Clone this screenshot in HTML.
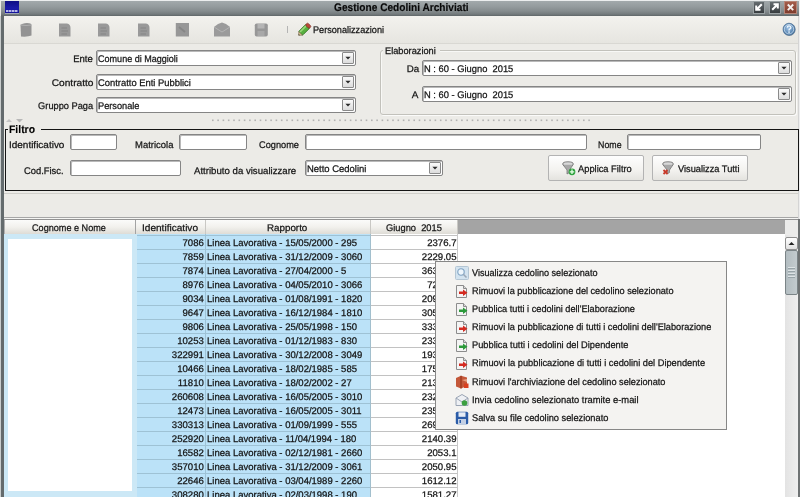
<!DOCTYPE html><html><head><meta charset="utf-8"><style>html,body{margin:0;padding:0;width:800px;height:497px;overflow:hidden;background:#ecebe7}body>div,body>svg{position:absolute}.t{font-family:"Liberation Sans", sans-serif;text-rendering:geometricPrecision;-webkit-text-stroke:0.25px currentColor;filter:grayscale(1)}</style></head><body><div style="left:0px;top:0px;width:800px;height:497px;background:#ecebe7"></div><div style="left:0px;top:0px;width:800px;height:1px;background:#eceeee"></div><div style="left:1px;top:1px;width:799px;height:15px;background:linear-gradient(#a2a9ab,#959c9e 35%,#868d8f 65%,#737a7c 88%,#5f6668)"></div><div style="left:1px;top:16px;width:3px;height:481px;background:#646b6d"></div><div style="left:0px;top:16px;width:1px;height:481px;background:#c9cdcd"></div><div style="left:799px;top:0px;width:1px;height:497px;background:#eeeeee"></div><div style="left:798px;top:16px;width:1px;height:203px;background:#d4d4d4"></div><div style="left:798px;top:219px;width:2px;height:278px;background:#6f7374"></div><div style="left:5px;top:1px;width:14px;height:12px;background:linear-gradient(#0e0e84,#1a1aa8 60%,#14149a)"></div><div style="left:6px;top:10px;width:12px;height:2px;background:repeating-linear-gradient(90deg,#d0d0f4 0 2px,#7070c8 2px 3px);opacity:0.85"></div><div style="left:5px;top:13px;width:14px;height:1px;background:#9da4b0"></div><div class="t" style="top:2.89px;font-size:11px;line-height:11px;font-weight:bold;color:#080808;white-space:pre;-webkit-text-stroke:0.15px #080808;left:333.80px;transform-origin:0.6px 0;transform:scaleX(0.9195);">Gestione Cedolini Archiviati</div><div style="left:753px;top:1px;width:12px;height:13px;background:linear-gradient(#6a7174,#33383b);box-shadow:inset 0 0 0 1px #9aa1a3"></div><div style="left:769px;top:1px;width:12px;height:13px;background:linear-gradient(#6a7174,#33383b);box-shadow:inset 0 0 0 1px #9aa1a3"></div><div style="left:784px;top:1px;width:13px;height:13px;background:linear-gradient(#a8604e,#7a382a);box-shadow:inset 0 0 0 1px #b68476"></div><svg style="left:753px;top:1px" width="12" height="12" viewBox="0 0 12 12"><path d="M8.8 3.2 L3.8 8.2 M3.2 4.5 V8.8 H7.5" stroke="#fff" stroke-width="2" fill="none"/></svg><svg style="left:769px;top:1px" width="12" height="12" viewBox="0 0 12 12"><path d="M3.2 8.8 L8.2 3.8 M4.5 3.2 H8.8 V7.5" stroke="#fff" stroke-width="2" fill="none"/></svg><svg style="left:784px;top:1px" width="13" height="13" viewBox="0 0 13 13"><path d="M3.8 3.5 L9.2 9.2 M9.2 3.5 L3.8 9.2" stroke="#f4f0ee" stroke-width="1.9" fill="none"/></svg><div style="left:4px;top:16px;width:794px;height:27px;background:linear-gradient(#f3f2ee,#e6e5e0)"></div><div style="left:4px;top:43px;width:794px;height:1px;background:#d9d8d3"></div><svg style="left:19px;top:22px" width="14" height="16" viewBox="0 0 14 16"><g style="filter:blur(0.35px)"><path d="M1.5 3 Q3 1.5 8 1 Q12.5 1.2 12.5 3 V13.5 Q9 15 2 14.5 Z" fill="#939393"/><path d="M1.5 3 Q7 4 12.5 3" stroke="#b0b0b0" fill="none"/></g></svg><svg style="left:58px;top:22px" width="14" height="16" viewBox="0 0 14 16"><g style="filter:blur(0.35px)"><path d="M1 1.5 H9 Q12.5 2 12.5 6 V14.5 H1 Z" fill="#999"/><path d="M3.5 6 H9 M3.5 9 H10 M3.5 12 H9" stroke="#858585"/></g></svg><svg style="left:97px;top:22px" width="14" height="16" viewBox="0 0 14 16"><g style="filter:blur(0.35px)"><path d="M1 1.5 H9 Q12.5 2 12.5 6 V14.5 H1 Z" fill="#999"/><path d="M3.5 6 H9 M3.5 9 H10 M3.5 12 H9" stroke="#858585"/></g></svg><svg style="left:137px;top:22px" width="14" height="16" viewBox="0 0 14 16"><g style="filter:blur(0.35px)"><path d="M1 1.5 H9 Q12.5 2 12.5 6 V14.5 H1 Z" fill="#999"/><path d="M3.5 6 H9 M3.5 9 H10 M3.5 12 H9" stroke="#858585"/></g></svg><svg style="left:175px;top:22px" width="15" height="16" viewBox="0 0 15 16"><g style="filter:blur(0.35px)"><rect x="0.8" y="1" width="13.2" height="13.5" fill="#979797"/><path d="M4 5 L10 10" stroke="#868686" stroke-width="2"/></g></svg><svg style="left:213px;top:21px" width="18" height="17" viewBox="0 0 18 17"><g style="filter:blur(0.35px)"><path d="M1 6 Q5 2 9 1.5 Q13 2 17 6 V15.5 H1 Z" fill="#9b9b9b"/><path d="M1 6 L9 11 L17 6" stroke="#b4b4b4" fill="none"/></g></svg><svg style="left:254px;top:22px" width="14" height="16" viewBox="0 0 14 16"><g style="filter:blur(0.35px)"><rect x="0.8" y="1.5" width="13" height="13" rx="1.8" fill="#979797"/><rect x="3.5" y="2" width="7" height="4.5" fill="#b5b5b5"/><rect x="3.5" y="9" width="7" height="5" fill="#a8a8a8"/></g></svg><div style="left:287px;top:26px;width:1px;height:7px;background:#b4b4b4"></div><svg style="left:296px;top:21px" width="17" height="17" viewBox="0 0 17 17"><g transform="rotate(-45 8.5 8.5)"><rect x="3" y="5.8" width="10" height="5.4" rx="1" fill="#58b040" stroke="#2e7020" stroke-width="0.8"/><rect x="3.5" y="6.3" width="9" height="1.6" fill="#9ad87a"/><rect x="12.2" y="5.8" width="3.3" height="5.4" rx="1.4" fill="#b84a3a" stroke="#7a2a20" stroke-width="0.6"/><path d="M3 5.8 L0.2 8.5 L3 11.2 Z" fill="#d8c090" stroke="#6a6040" stroke-width="0.5"/><path d="M1.2 7.5 L0.2 8.5 L1.2 9.5 Z" fill="#303030"/></g></svg><div class="t" style="top:26.07px;font-size:9.6px;line-height:9.6px;font-weight:normal;color:#141414;white-space:pre;left:313.00px;transform-origin:0.6px 0;transform:scaleX(0.9504);">Personalizzazioni</div><svg style="left:781px;top:21px" width="16" height="16" viewBox="0 0 16 16"><defs><radialGradient id="hg" cx="45%" cy="40%" r="60%"><stop offset="0" stop-color="#a2c4e6"/><stop offset="1" stop-color="#40709f"/></radialGradient></defs><circle cx="8.3" cy="8.6" r="6.3" fill="#3c5670" opacity="0.6"/><circle cx="8" cy="8.2" r="6" fill="url(#hg)" stroke="#50749a" stroke-width="0.7"/><circle cx="8" cy="8.2" r="4.7" fill="none" stroke="#d8e8f6" stroke-width="0.7"/><path d="M6.2 6.6 Q6.3 4.9 8.1 4.9 Q9.9 5 9.9 6.5 Q9.9 7.5 8.6 8.1 Q8 8.5 8 9.5" stroke="#eaf4fc" stroke-width="1.4" fill="none"/><rect x="7.3" y="10.4" width="1.5" height="1.4" fill="#eaf4fc"/></svg><div class="t" style="top:55.07px;font-size:9.6px;line-height:9.6px;font-weight:normal;color:#141414;white-space:pre;right:706.80px;transform-origin:100% 0;transform:scaleX(0.9920);">Ente</div><div class="t" style="top:79.07px;font-size:9.6px;line-height:9.6px;font-weight:normal;color:#141414;white-space:pre;right:706.80px;transform-origin:100% 0;transform:scaleX(1.0580);">Contratto</div><div class="t" style="top:102.07px;font-size:9.6px;line-height:9.6px;font-weight:normal;color:#141414;white-space:pre;right:706.80px;transform-origin:100% 0;transform:scaleX(0.9629);">Gruppo Paga</div><div style="left:96px;top:50px;width:260px;height:16px;background:#fff;border:1px solid #858585;box-sizing:border-box;box-shadow:inset 1px 1px 0 #b9b9b9;border-radius:2px"></div><div style="left:342px;top:52px;width:12px;height:12px;background:linear-gradient(#fafafa,#dcdcdc);border:1px solid #8a8a8a;box-sizing:border-box;border-radius:1px"></div><svg style="left:342px;top:52px" width="12" height="12" viewBox="0 0 12 12"><path d="M3.4 4.7 H8.6 L6.0 7.5 Z" fill="#2a2a2a"/></svg><div class="t" style="top:55.07px;font-size:9.6px;line-height:9.6px;font-weight:normal;color:#141414;white-space:pre;left:97.60px;transform-origin:0.6px 0;transform:scaleX(0.9416);">Comune di Maggioli</div><div style="left:96px;top:74px;width:260px;height:16px;background:#fff;border:1px solid #858585;box-sizing:border-box;box-shadow:inset 1px 1px 0 #b9b9b9;border-radius:2px"></div><div style="left:342px;top:76px;width:12px;height:12px;background:linear-gradient(#fafafa,#dcdcdc);border:1px solid #8a8a8a;box-sizing:border-box;border-radius:1px"></div><svg style="left:342px;top:76px" width="12" height="12" viewBox="0 0 12 12"><path d="M3.4 4.7 H8.6 L6.0 7.5 Z" fill="#2a2a2a"/></svg><div class="t" style="top:79.07px;font-size:9.6px;line-height:9.6px;font-weight:normal;color:#141414;white-space:pre;left:97.60px;transform-origin:0.6px 0;transform:scaleX(0.9785);">Contratto Enti Pubblici</div><div style="left:96px;top:97px;width:260px;height:16px;background:#fff;border:1px solid #858585;box-sizing:border-box;box-shadow:inset 1px 1px 0 #b9b9b9;border-radius:2px"></div><div style="left:342px;top:99px;width:12px;height:12px;background:linear-gradient(#fafafa,#dcdcdc);border:1px solid #8a8a8a;box-sizing:border-box;border-radius:1px"></div><svg style="left:342px;top:99px" width="12" height="12" viewBox="0 0 12 12"><path d="M3.4 4.7 H8.6 L6.0 7.5 Z" fill="#2a2a2a"/></svg><div class="t" style="top:102.07px;font-size:9.6px;line-height:9.6px;font-weight:normal;color:#141414;white-space:pre;left:97.60px;transform-origin:0.6px 0;transform:scaleX(0.9596);">Personale</div><div style="left:380px;top:50px;width:416px;height:65px;border:1px solid #c2c1bb;box-sizing:border-box;border-radius:3px;box-shadow:1px 1px 0 #fbfbfa, inset 1px 1px 0 #f8f8f6"></div><div style="left:383px;top:45px;width:57px;height:9px;background:#ecebe7"></div><div class="t" style="top:47.07px;font-size:9.6px;line-height:9.6px;font-weight:normal;color:#141414;white-space:pre;left:384.90px;transform-origin:0.6px 0;transform:scaleX(0.9612);">Elaborazioni</div><div class="t" style="top:65.07px;font-size:9.6px;line-height:9.6px;font-weight:normal;color:#141414;white-space:pre;right:381.00px;transform-origin:100% 0;transform:scaleX(1.0119);">Da</div><div class="t" style="top:91.07px;font-size:9.6px;line-height:9.6px;font-weight:normal;color:#141414;white-space:pre;right:381.20px;transform-origin:100% 0;transform:scaleX(1.0358);">A</div><div style="left:422px;top:60px;width:370px;height:16px;background:#fff;border:1px solid #858585;box-sizing:border-box;box-shadow:inset 1px 1px 0 #b9b9b9;border-radius:2px"></div><div style="left:778px;top:62px;width:12px;height:12px;background:linear-gradient(#fafafa,#dcdcdc);border:1px solid #8a8a8a;box-sizing:border-box;border-radius:1px"></div><svg style="left:778px;top:62px" width="12" height="12" viewBox="0 0 12 12"><path d="M3.4 4.7 H8.6 L6.0 7.5 Z" fill="#2a2a2a"/></svg><div class="t" style="top:65.07px;font-size:9.6px;line-height:9.6px;font-weight:normal;color:#141414;white-space:pre;left:423.60px;transform-origin:0.6px 0;transform:scaleX(0.9732);">N : 60 - Giugno  2015</div><div style="left:422px;top:86px;width:370px;height:16px;background:#fff;border:1px solid #858585;box-sizing:border-box;box-shadow:inset 1px 1px 0 #b9b9b9;border-radius:2px"></div><div style="left:778px;top:88px;width:12px;height:12px;background:linear-gradient(#fafafa,#dcdcdc);border:1px solid #8a8a8a;box-sizing:border-box;border-radius:1px"></div><svg style="left:778px;top:88px" width="12" height="12" viewBox="0 0 12 12"><path d="M3.4 4.7 H8.6 L6.0 7.5 Z" fill="#2a2a2a"/></svg><div class="t" style="top:91.07px;font-size:9.6px;line-height:9.6px;font-weight:normal;color:#141414;white-space:pre;left:423.60px;transform-origin:0.6px 0;transform:scaleX(0.9732);">N : 60 - Giugno  2015</div><svg style="left:0px;top:119px" width="600" height="3" viewBox="0 0 600 3"><rect x="212.0" y="0.5" width="1.6" height="1.6" fill="#b2b2b2"/><rect x="217.3" y="0.5" width="1.6" height="1.6" fill="#b2b2b2"/><rect x="222.6" y="0.5" width="1.6" height="1.6" fill="#b2b2b2"/><rect x="227.9" y="0.5" width="1.6" height="1.6" fill="#b2b2b2"/><rect x="233.2" y="0.5" width="1.6" height="1.6" fill="#b2b2b2"/><rect x="238.5" y="0.5" width="1.6" height="1.6" fill="#b2b2b2"/><rect x="243.8" y="0.5" width="1.6" height="1.6" fill="#b2b2b2"/><rect x="249.1" y="0.5" width="1.6" height="1.6" fill="#b2b2b2"/><rect x="254.4" y="0.5" width="1.6" height="1.6" fill="#b2b2b2"/><rect x="259.7" y="0.5" width="1.6" height="1.6" fill="#b2b2b2"/><rect x="265.0" y="0.5" width="1.6" height="1.6" fill="#b2b2b2"/><rect x="270.3" y="0.5" width="1.6" height="1.6" fill="#b2b2b2"/><rect x="275.6" y="0.5" width="1.6" height="1.6" fill="#b2b2b2"/><rect x="280.9" y="0.5" width="1.6" height="1.6" fill="#b2b2b2"/><rect x="286.2" y="0.5" width="1.6" height="1.6" fill="#b2b2b2"/><rect x="291.5" y="0.5" width="1.6" height="1.6" fill="#b2b2b2"/><rect x="296.8" y="0.5" width="1.6" height="1.6" fill="#b2b2b2"/><rect x="302.1" y="0.5" width="1.6" height="1.6" fill="#b2b2b2"/><rect x="307.4" y="0.5" width="1.6" height="1.6" fill="#b2b2b2"/><rect x="312.7" y="0.5" width="1.6" height="1.6" fill="#b2b2b2"/><rect x="318.0" y="0.5" width="1.6" height="1.6" fill="#b2b2b2"/><rect x="323.3" y="0.5" width="1.6" height="1.6" fill="#b2b2b2"/><rect x="328.6" y="0.5" width="1.6" height="1.6" fill="#b2b2b2"/><rect x="333.9" y="0.5" width="1.6" height="1.6" fill="#b2b2b2"/><rect x="339.2" y="0.5" width="1.6" height="1.6" fill="#b2b2b2"/><rect x="344.5" y="0.5" width="1.6" height="1.6" fill="#b2b2b2"/><rect x="349.8" y="0.5" width="1.6" height="1.6" fill="#b2b2b2"/><rect x="355.1" y="0.5" width="1.6" height="1.6" fill="#b2b2b2"/><rect x="360.4" y="0.5" width="1.6" height="1.6" fill="#b2b2b2"/><rect x="365.7" y="0.5" width="1.6" height="1.6" fill="#b2b2b2"/><rect x="371.0" y="0.5" width="1.6" height="1.6" fill="#b2b2b2"/><rect x="376.3" y="0.5" width="1.6" height="1.6" fill="#b2b2b2"/><rect x="381.6" y="0.5" width="1.6" height="1.6" fill="#b2b2b2"/><rect x="386.9" y="0.5" width="1.6" height="1.6" fill="#b2b2b2"/><rect x="392.2" y="0.5" width="1.6" height="1.6" fill="#b2b2b2"/><rect x="397.5" y="0.5" width="1.6" height="1.6" fill="#b2b2b2"/><rect x="402.8" y="0.5" width="1.6" height="1.6" fill="#b2b2b2"/><rect x="408.1" y="0.5" width="1.6" height="1.6" fill="#b2b2b2"/><rect x="413.4" y="0.5" width="1.6" height="1.6" fill="#b2b2b2"/><rect x="418.7" y="0.5" width="1.6" height="1.6" fill="#b2b2b2"/><rect x="424.0" y="0.5" width="1.6" height="1.6" fill="#b2b2b2"/><rect x="429.3" y="0.5" width="1.6" height="1.6" fill="#b2b2b2"/><rect x="434.6" y="0.5" width="1.6" height="1.6" fill="#b2b2b2"/><rect x="439.9" y="0.5" width="1.6" height="1.6" fill="#b2b2b2"/><rect x="445.2" y="0.5" width="1.6" height="1.6" fill="#b2b2b2"/><rect x="450.5" y="0.5" width="1.6" height="1.6" fill="#b2b2b2"/><rect x="455.8" y="0.5" width="1.6" height="1.6" fill="#b2b2b2"/><rect x="461.1" y="0.5" width="1.6" height="1.6" fill="#b2b2b2"/><rect x="466.4" y="0.5" width="1.6" height="1.6" fill="#b2b2b2"/><rect x="471.7" y="0.5" width="1.6" height="1.6" fill="#b2b2b2"/><rect x="477.0" y="0.5" width="1.6" height="1.6" fill="#b2b2b2"/><rect x="482.3" y="0.5" width="1.6" height="1.6" fill="#b2b2b2"/><rect x="487.6" y="0.5" width="1.6" height="1.6" fill="#b2b2b2"/><rect x="492.9" y="0.5" width="1.6" height="1.6" fill="#b2b2b2"/><rect x="498.2" y="0.5" width="1.6" height="1.6" fill="#b2b2b2"/><rect x="503.5" y="0.5" width="1.6" height="1.6" fill="#b2b2b2"/><rect x="508.8" y="0.5" width="1.6" height="1.6" fill="#b2b2b2"/><rect x="514.1" y="0.5" width="1.6" height="1.6" fill="#b2b2b2"/><rect x="519.4" y="0.5" width="1.6" height="1.6" fill="#b2b2b2"/><rect x="524.7" y="0.5" width="1.6" height="1.6" fill="#b2b2b2"/><rect x="530.0" y="0.5" width="1.6" height="1.6" fill="#b2b2b2"/><rect x="535.3" y="0.5" width="1.6" height="1.6" fill="#b2b2b2"/><rect x="540.6" y="0.5" width="1.6" height="1.6" fill="#b2b2b2"/><rect x="545.9" y="0.5" width="1.6" height="1.6" fill="#b2b2b2"/><rect x="551.2" y="0.5" width="1.6" height="1.6" fill="#b2b2b2"/><rect x="556.5" y="0.5" width="1.6" height="1.6" fill="#b2b2b2"/><rect x="561.8" y="0.5" width="1.6" height="1.6" fill="#b2b2b2"/><rect x="567.1" y="0.5" width="1.6" height="1.6" fill="#b2b2b2"/><rect x="572.4" y="0.5" width="1.6" height="1.6" fill="#b2b2b2"/><rect x="577.7" y="0.5" width="1.6" height="1.6" fill="#b2b2b2"/><rect x="583.0" y="0.5" width="1.6" height="1.6" fill="#b2b2b2"/><rect x="588.3" y="0.5" width="1.6" height="1.6" fill="#b2b2b2"/></svg><svg style="left:5px;top:118px" width="20" height="5" viewBox="0 0 20 5"><path d="M1 4 L4 1 L7 4 Z" fill="#c4c4c4"/><path d="M11 1 H18 L14.5 4.5 Z" fill="#b8b8b8"/></svg><div style="left:5px;top:129px;width:794px;height:62px;border:1px solid #141414;box-sizing:border-box"></div><div style="left:8px;top:123px;width:33px;height:10px;background:#ecebe7"></div><div class="t" style="top:124.89px;font-size:11px;line-height:11px;font-weight:bold;color:#000;white-space:pre;-webkit-text-stroke:0.1px #000;left:9.40px;transform-origin:0.6px 0;transform:scaleX(0.9434);">Filtro</div><div class="t" style="top:141.07px;font-size:9.6px;line-height:9.6px;font-weight:normal;color:#141414;white-space:pre;left:9.00px;transform-origin:0.6px 0;transform:scaleX(1.0396);">Identificativo</div><div style="left:70px;top:134px;width:47px;height:16px;background:#fff;border:1px solid #858585;box-sizing:border-box;box-shadow:inset 1px 1px 0 #b9b9b9;border-radius:2px"></div><div class="t" style="top:141.07px;font-size:9.6px;line-height:9.6px;font-weight:normal;color:#141414;white-space:pre;left:135.00px;transform-origin:0.6px 0;transform:scaleX(0.9862);">Matricola</div><div style="left:179px;top:134px;width:68px;height:16px;background:#fff;border:1px solid #858585;box-sizing:border-box;box-shadow:inset 1px 1px 0 #b9b9b9;border-radius:2px"></div><div class="t" style="top:141.07px;font-size:9.6px;line-height:9.6px;font-weight:normal;color:#141414;white-space:pre;left:259.40px;transform-origin:0.6px 0;transform:scaleX(0.9604);">Cognome</div><div style="left:305px;top:134px;width:282px;height:16px;background:#fff;border:1px solid #858585;box-sizing:border-box;box-shadow:inset 1px 1px 0 #b9b9b9;border-radius:2px"></div><div class="t" style="top:141.07px;font-size:9.6px;line-height:9.6px;font-weight:normal;color:#141414;white-space:pre;left:597.80px;transform-origin:0.6px 0;transform:scaleX(0.9189);">Nome</div><div style="left:627px;top:134px;width:134px;height:16px;background:#fff;border:1px solid #858585;box-sizing:border-box;box-shadow:inset 1px 1px 0 #b9b9b9;border-radius:2px"></div><div class="t" style="top:167.07px;font-size:9.6px;line-height:9.6px;font-weight:normal;color:#141414;white-space:pre;left:24.40px;transform-origin:0.6px 0;transform:scaleX(0.9764);">Cod.Fisc.</div><div style="left:70px;top:160px;width:111px;height:16px;background:#fff;border:1px solid #858585;box-sizing:border-box;box-shadow:inset 1px 1px 0 #b9b9b9;border-radius:2px"></div><div class="t" style="top:167.07px;font-size:9.6px;line-height:9.6px;font-weight:normal;color:#141414;white-space:pre;left:194.20px;transform-origin:0.6px 0;transform:scaleX(1.0034);">Attributo da visualizzare</div><div style="left:305px;top:160px;width:138px;height:16px;background:#fff;border:1px solid #858585;box-sizing:border-box;box-shadow:inset 1px 1px 0 #b9b9b9;border-radius:2px"></div><div style="left:429px;top:162px;width:12px;height:12px;background:linear-gradient(#fafafa,#dcdcdc);border:1px solid #8a8a8a;box-sizing:border-box;border-radius:1px"></div><svg style="left:429px;top:162px" width="12" height="12" viewBox="0 0 12 12"><path d="M3.4 4.7 H8.6 L6.0 7.5 Z" fill="#2a2a2a"/></svg><div class="t" style="top:165.07px;font-size:9.6px;line-height:9.6px;font-weight:normal;color:#141414;white-space:pre;left:306.60px;transform-origin:0.6px 0;transform:scaleX(0.9854);">Netto Cedolini</div><div style="left:548px;top:155px;width:96px;height:26px;background:linear-gradient(#fefefe,#f3f2ef 60%,#e4e3df);border:1px solid #b3b3b3;box-sizing:border-box;border-radius:2px"></div><svg style="left:562px;top:161px" width="14" height="15" viewBox="0 0 14 15"><ellipse cx="6" cy="3" rx="5.3" ry="2.2" fill="#d8d8d8" stroke="#6a6a6a" stroke-width="0.8"/><path d="M1 3.8 L5 9 V13 L7.5 11.5 V9 L11 3.8" fill="#a8a8a8" stroke="#777" stroke-width="0.8"/><circle cx="10" cy="10.8" r="3.4" fill="#2ea23e"/><path d="M7.8 10.8 H12.2 M10 8.6 V13" stroke="#e8ffe8" stroke-width="1.3"/></svg><div class="t" style="top:165.07px;font-size:9.6px;line-height:9.6px;font-weight:normal;color:#141414;white-space:pre;left:577.90px;transform-origin:0.6px 0;transform:scaleX(0.9696);">Applica Filtro</div><div style="left:652px;top:155px;width:96px;height:26px;background:linear-gradient(#fefefe,#f3f2ef 60%,#e4e3df);border:1px solid #b3b3b3;box-sizing:border-box;border-radius:2px"></div><svg style="left:662px;top:161px" width="14" height="15" viewBox="0 0 14 15"><ellipse cx="6" cy="3" rx="5.3" ry="2.2" fill="#d8d8d8" stroke="#6a6a6a" stroke-width="0.8"/><path d="M1 3.8 L5 9 V13 L7.5 11.5 V9 L11 3.8" fill="#a8a8a8" stroke="#777" stroke-width="0.8"/><path d="M1.5 9 L5.5 13 M5.5 9 L1.5 13" stroke="#c83a2a" stroke-width="1.8"/></svg><div class="t" style="top:165.07px;font-size:9.6px;line-height:9.6px;font-weight:normal;color:#141414;white-space:pre;left:678.30px;transform-origin:0.6px 0;transform:scaleX(0.9632);">Visualizza Tutti</div><div style="left:4px;top:193px;width:794px;height:1px;background:#d0cfca"></div><div style="left:4px;top:217px;width:794px;height:1px;background:#a6a6a6"></div><div style="left:4px;top:218px;width:794px;height:1px;background:#f6f6f4"></div><div style="left:4px;top:219px;width:794px;height:1px;background:#929292"></div><div style="left:4px;top:220px;width:454px;height:14px;background:linear-gradient(#fbfbfa,#f2f1ed 50%,#dedcd6);"></div><div style="left:135px;top:220px;width:1px;height:14px;background:#a3a3a3"></div><div style="left:4px;top:220px;width:1px;height:14px;background:#b0b0b0"></div><div style="left:205px;top:220px;width:1px;height:14px;background:#c9c8c4"></div><div style="left:370px;top:220px;width:1px;height:14px;background:#c9c8c4"></div><div style="left:457px;top:220px;width:1px;height:14px;background:#c9c8c4"></div><div style="left:458px;top:220px;width:327px;height:15px;background:#a4a4a4"></div><div style="left:785px;top:220px;width:13px;height:17px;background:#ebebea"></div><div class="t" style="top:224.07px;font-size:9.6px;line-height:9.6px;font-weight:normal;color:#141414;white-space:pre;left:32.30px;transform-origin:0.6px 0;transform:scaleX(0.9485);">Cognome e Nome</div><div class="t" style="top:224.07px;font-size:9.6px;line-height:9.6px;font-weight:normal;color:#141414;white-space:pre;left:142.00px;transform-origin:0.6px 0;transform:scaleX(1.0511);">Identificativo</div><div class="t" style="top:224.07px;font-size:9.6px;line-height:9.6px;font-weight:normal;color:#141414;white-space:pre;left:266.90px;transform-origin:0.6px 0;transform:scaleX(1.0216);">Rapporto</div><div class="t" style="top:224.07px;font-size:9.6px;line-height:9.6px;font-weight:normal;color:#141414;white-space:pre;left:386.00px;transform-origin:0.6px 0;transform:scaleX(0.9698);">Giugno  2015</div><div style="left:458px;top:234px;width:327px;height:263px;background:#fff"></div><div style="left:4px;top:234px;width:133px;height:263px;background:#cce8f6"></div><div style="left:8px;top:239px;width:124px;height:252px;background:#fff"></div><div style="left:137px;top:234px;width:233px;height:263px;background:#bbe2f8"></div><div style="left:371px;top:234px;width:87px;height:263px;background:#fff"></div><div style="left:137px;top:235px;width:233px;height:1px;background:#9ec2d5"></div><div style="left:371px;top:235px;width:87px;height:1px;background:#c2c2c2"></div><div class="t" style="top:239.07px;font-size:9.6px;line-height:9.6px;font-weight:normal;color:#141414;white-space:pre;right:596.20px;transform-origin:100% 0;">7086</div><div class="t" style="top:239.07px;font-size:9.6px;line-height:9.6px;font-weight:normal;color:#141414;white-space:pre;left:206.60px;transform-origin:0.6px 0;transform:scaleX(0.9900);">Linea Lavorativa - 15/05/2000 - 295</div><div class="t" style="top:239.07px;font-size:9.6px;line-height:9.6px;font-weight:normal;color:#141414;white-space:pre;right:343.50px;transform-origin:100% 0;">2376.7</div><div style="left:137px;top:249px;width:233px;height:1px;background:#9ec2d5"></div><div style="left:371px;top:249px;width:87px;height:1px;background:#c2c2c2"></div><div class="t" style="top:253.07px;font-size:9.6px;line-height:9.6px;font-weight:normal;color:#141414;white-space:pre;right:596.20px;transform-origin:100% 0;">7859</div><div class="t" style="top:253.07px;font-size:9.6px;line-height:9.6px;font-weight:normal;color:#141414;white-space:pre;left:206.60px;transform-origin:0.6px 0;transform:scaleX(0.9900);">Linea Lavorativa - 31/12/2009 - 3060</div><div class="t" style="top:253.07px;font-size:9.6px;line-height:9.6px;font-weight:normal;color:#141414;white-space:pre;right:343.50px;transform-origin:100% 0;">2229.05</div><div style="left:137px;top:263px;width:233px;height:1px;background:#9ec2d5"></div><div style="left:371px;top:263px;width:87px;height:1px;background:#c2c2c2"></div><div class="t" style="top:267.07px;font-size:9.6px;line-height:9.6px;font-weight:normal;color:#141414;white-space:pre;right:596.20px;transform-origin:100% 0;">7874</div><div class="t" style="top:267.07px;font-size:9.6px;line-height:9.6px;font-weight:normal;color:#141414;white-space:pre;left:206.60px;transform-origin:0.6px 0;transform:scaleX(0.9900);">Linea Lavorativa - 27/04/2000 - 5</div><div class="t" style="top:267.07px;font-size:9.6px;line-height:9.6px;font-weight:normal;color:#141414;white-space:pre;right:343.50px;transform-origin:100% 0;">3637.41</div><div style="left:137px;top:277px;width:233px;height:1px;background:#9ec2d5"></div><div style="left:371px;top:277px;width:87px;height:1px;background:#c2c2c2"></div><div class="t" style="top:281.07px;font-size:9.6px;line-height:9.6px;font-weight:normal;color:#141414;white-space:pre;right:596.20px;transform-origin:100% 0;">8976</div><div class="t" style="top:281.07px;font-size:9.6px;line-height:9.6px;font-weight:normal;color:#141414;white-space:pre;left:206.60px;transform-origin:0.6px 0;transform:scaleX(0.9900);">Linea Lavorativa - 04/05/2010 - 3066</div><div class="t" style="top:281.07px;font-size:9.6px;line-height:9.6px;font-weight:normal;color:#141414;white-space:pre;right:343.50px;transform-origin:100% 0;">724.87</div><div style="left:137px;top:291px;width:233px;height:1px;background:#9ec2d5"></div><div style="left:371px;top:291px;width:87px;height:1px;background:#c2c2c2"></div><div class="t" style="top:295.07px;font-size:9.6px;line-height:9.6px;font-weight:normal;color:#141414;white-space:pre;right:596.20px;transform-origin:100% 0;">9034</div><div class="t" style="top:295.07px;font-size:9.6px;line-height:9.6px;font-weight:normal;color:#141414;white-space:pre;left:206.60px;transform-origin:0.6px 0;transform:scaleX(0.9900);">Linea Lavorativa - 01/08/1991 - 1820</div><div class="t" style="top:295.07px;font-size:9.6px;line-height:9.6px;font-weight:normal;color:#141414;white-space:pre;right:343.50px;transform-origin:100% 0;">2093.18</div><div style="left:137px;top:305px;width:233px;height:1px;background:#9ec2d5"></div><div style="left:371px;top:305px;width:87px;height:1px;background:#c2c2c2"></div><div class="t" style="top:309.07px;font-size:9.6px;line-height:9.6px;font-weight:normal;color:#141414;white-space:pre;right:596.20px;transform-origin:100% 0;">9647</div><div class="t" style="top:309.07px;font-size:9.6px;line-height:9.6px;font-weight:normal;color:#141414;white-space:pre;left:206.60px;transform-origin:0.6px 0;transform:scaleX(0.9900);">Linea Lavorativa - 16/12/1984 - 1810</div><div class="t" style="top:309.07px;font-size:9.6px;line-height:9.6px;font-weight:normal;color:#141414;white-space:pre;right:343.50px;transform-origin:100% 0;">3054.62</div><div style="left:137px;top:319px;width:233px;height:1px;background:#9ec2d5"></div><div style="left:371px;top:319px;width:87px;height:1px;background:#c2c2c2"></div><div class="t" style="top:323.07px;font-size:9.6px;line-height:9.6px;font-weight:normal;color:#141414;white-space:pre;right:596.20px;transform-origin:100% 0;">9806</div><div class="t" style="top:323.07px;font-size:9.6px;line-height:9.6px;font-weight:normal;color:#141414;white-space:pre;left:206.60px;transform-origin:0.6px 0;transform:scaleX(0.9900);">Linea Lavorativa - 25/05/1998 - 150</div><div class="t" style="top:323.07px;font-size:9.6px;line-height:9.6px;font-weight:normal;color:#141414;white-space:pre;right:343.50px;transform-origin:100% 0;">3331.09</div><div style="left:137px;top:333px;width:233px;height:1px;background:#9ec2d5"></div><div style="left:371px;top:333px;width:87px;height:1px;background:#c2c2c2"></div><div class="t" style="top:337.07px;font-size:9.6px;line-height:9.6px;font-weight:normal;color:#141414;white-space:pre;right:596.20px;transform-origin:100% 0;">10253</div><div class="t" style="top:337.07px;font-size:9.6px;line-height:9.6px;font-weight:normal;color:#141414;white-space:pre;left:206.60px;transform-origin:0.6px 0;transform:scaleX(0.9900);">Linea Lavorativa - 01/12/1983 - 830</div><div class="t" style="top:337.07px;font-size:9.6px;line-height:9.6px;font-weight:normal;color:#141414;white-space:pre;right:343.50px;transform-origin:100% 0;">2336.74</div><div style="left:137px;top:347px;width:233px;height:1px;background:#9ec2d5"></div><div style="left:371px;top:347px;width:87px;height:1px;background:#c2c2c2"></div><div class="t" style="top:351.07px;font-size:9.6px;line-height:9.6px;font-weight:normal;color:#141414;white-space:pre;right:596.20px;transform-origin:100% 0;">322991</div><div class="t" style="top:351.07px;font-size:9.6px;line-height:9.6px;font-weight:normal;color:#141414;white-space:pre;left:206.60px;transform-origin:0.6px 0;transform:scaleX(0.9900);">Linea Lavorativa - 30/12/2008 - 3049</div><div class="t" style="top:351.07px;font-size:9.6px;line-height:9.6px;font-weight:normal;color:#141414;white-space:pre;right:343.50px;transform-origin:100% 0;">1937.55</div><div style="left:137px;top:361px;width:233px;height:1px;background:#9ec2d5"></div><div style="left:371px;top:361px;width:87px;height:1px;background:#c2c2c2"></div><div class="t" style="top:365.07px;font-size:9.6px;line-height:9.6px;font-weight:normal;color:#141414;white-space:pre;right:596.20px;transform-origin:100% 0;">10466</div><div class="t" style="top:365.07px;font-size:9.6px;line-height:9.6px;font-weight:normal;color:#141414;white-space:pre;left:206.60px;transform-origin:0.6px 0;transform:scaleX(0.9900);">Linea Lavorativa - 18/02/1985 - 585</div><div class="t" style="top:365.07px;font-size:9.6px;line-height:9.6px;font-weight:normal;color:#141414;white-space:pre;right:343.50px;transform-origin:100% 0;">1756.20</div><div style="left:137px;top:375px;width:233px;height:1px;background:#9ec2d5"></div><div style="left:371px;top:375px;width:87px;height:1px;background:#c2c2c2"></div><div class="t" style="top:379.07px;font-size:9.6px;line-height:9.6px;font-weight:normal;color:#141414;white-space:pre;right:596.20px;transform-origin:100% 0;">11810</div><div class="t" style="top:379.07px;font-size:9.6px;line-height:9.6px;font-weight:normal;color:#141414;white-space:pre;left:206.60px;transform-origin:0.6px 0;transform:scaleX(0.9900);">Linea Lavorativa - 18/02/2002 - 27</div><div class="t" style="top:379.07px;font-size:9.6px;line-height:9.6px;font-weight:normal;color:#141414;white-space:pre;right:343.50px;transform-origin:100% 0;">2134.48</div><div style="left:137px;top:389px;width:233px;height:1px;background:#9ec2d5"></div><div style="left:371px;top:389px;width:87px;height:1px;background:#c2c2c2"></div><div class="t" style="top:393.07px;font-size:9.6px;line-height:9.6px;font-weight:normal;color:#141414;white-space:pre;right:596.20px;transform-origin:100% 0;">260608</div><div class="t" style="top:393.07px;font-size:9.6px;line-height:9.6px;font-weight:normal;color:#141414;white-space:pre;left:206.60px;transform-origin:0.6px 0;transform:scaleX(0.9900);">Linea Lavorativa - 16/05/2005 - 3010</div><div class="t" style="top:393.07px;font-size:9.6px;line-height:9.6px;font-weight:normal;color:#141414;white-space:pre;right:343.50px;transform-origin:100% 0;">2321.93</div><div style="left:137px;top:403px;width:233px;height:1px;background:#9ec2d5"></div><div style="left:371px;top:403px;width:87px;height:1px;background:#c2c2c2"></div><div class="t" style="top:407.07px;font-size:9.6px;line-height:9.6px;font-weight:normal;color:#141414;white-space:pre;right:596.20px;transform-origin:100% 0;">12473</div><div class="t" style="top:407.07px;font-size:9.6px;line-height:9.6px;font-weight:normal;color:#141414;white-space:pre;left:206.60px;transform-origin:0.6px 0;transform:scaleX(0.9900);">Linea Lavorativa - 16/05/2005 - 3011</div><div class="t" style="top:407.07px;font-size:9.6px;line-height:9.6px;font-weight:normal;color:#141414;white-space:pre;right:343.50px;transform-origin:100% 0;">2356.17</div><div style="left:137px;top:417px;width:233px;height:1px;background:#9ec2d5"></div><div style="left:371px;top:417px;width:87px;height:1px;background:#c2c2c2"></div><div class="t" style="top:421.07px;font-size:9.6px;line-height:9.6px;font-weight:normal;color:#141414;white-space:pre;right:596.20px;transform-origin:100% 0;">330313</div><div class="t" style="top:421.07px;font-size:9.6px;line-height:9.6px;font-weight:normal;color:#141414;white-space:pre;left:206.60px;transform-origin:0.6px 0;transform:scaleX(0.9900);">Linea Lavorativa - 01/09/1999 - 555</div><div class="t" style="top:421.07px;font-size:9.6px;line-height:9.6px;font-weight:normal;color:#141414;white-space:pre;right:343.50px;transform-origin:100% 0;">2695.30</div><div style="left:137px;top:431px;width:233px;height:1px;background:#9ec2d5"></div><div style="left:371px;top:431px;width:87px;height:1px;background:#c2c2c2"></div><div class="t" style="top:435.07px;font-size:9.6px;line-height:9.6px;font-weight:normal;color:#141414;white-space:pre;right:596.20px;transform-origin:100% 0;">252920</div><div class="t" style="top:435.07px;font-size:9.6px;line-height:9.6px;font-weight:normal;color:#141414;white-space:pre;left:206.60px;transform-origin:0.6px 0;transform:scaleX(0.9900);">Linea Lavorativa - 11/04/1994 - 180</div><div class="t" style="top:435.07px;font-size:9.6px;line-height:9.6px;font-weight:normal;color:#141414;white-space:pre;right:343.50px;transform-origin:100% 0;">2140.39</div><div style="left:137px;top:445px;width:233px;height:1px;background:#9ec2d5"></div><div style="left:371px;top:445px;width:87px;height:1px;background:#c2c2c2"></div><div class="t" style="top:449.07px;font-size:9.6px;line-height:9.6px;font-weight:normal;color:#141414;white-space:pre;right:596.20px;transform-origin:100% 0;">16582</div><div class="t" style="top:449.07px;font-size:9.6px;line-height:9.6px;font-weight:normal;color:#141414;white-space:pre;left:206.60px;transform-origin:0.6px 0;transform:scaleX(0.9900);">Linea Lavorativa - 02/12/1981 - 2660</div><div class="t" style="top:449.07px;font-size:9.6px;line-height:9.6px;font-weight:normal;color:#141414;white-space:pre;right:343.50px;transform-origin:100% 0;">2053.1</div><div style="left:137px;top:459px;width:233px;height:1px;background:#9ec2d5"></div><div style="left:371px;top:459px;width:87px;height:1px;background:#c2c2c2"></div><div class="t" style="top:463.07px;font-size:9.6px;line-height:9.6px;font-weight:normal;color:#141414;white-space:pre;right:596.20px;transform-origin:100% 0;">357010</div><div class="t" style="top:463.07px;font-size:9.6px;line-height:9.6px;font-weight:normal;color:#141414;white-space:pre;left:206.60px;transform-origin:0.6px 0;transform:scaleX(0.9900);">Linea Lavorativa - 31/12/2009 - 3061</div><div class="t" style="top:463.07px;font-size:9.6px;line-height:9.6px;font-weight:normal;color:#141414;white-space:pre;right:343.50px;transform-origin:100% 0;">2050.95</div><div style="left:137px;top:473px;width:233px;height:1px;background:#9ec2d5"></div><div style="left:371px;top:473px;width:87px;height:1px;background:#c2c2c2"></div><div class="t" style="top:477.07px;font-size:9.6px;line-height:9.6px;font-weight:normal;color:#141414;white-space:pre;right:596.20px;transform-origin:100% 0;">22646</div><div class="t" style="top:477.07px;font-size:9.6px;line-height:9.6px;font-weight:normal;color:#141414;white-space:pre;left:206.60px;transform-origin:0.6px 0;transform:scaleX(0.9900);">Linea Lavorativa - 03/04/1989 - 2260</div><div class="t" style="top:477.07px;font-size:9.6px;line-height:9.6px;font-weight:normal;color:#141414;white-space:pre;right:343.50px;transform-origin:100% 0;">1612.12</div><div style="left:137px;top:487px;width:233px;height:1px;background:#9ec2d5"></div><div style="left:371px;top:487px;width:87px;height:1px;background:#c2c2c2"></div><div class="t" style="top:491.07px;font-size:9.6px;line-height:9.6px;font-weight:normal;color:#141414;white-space:pre;right:596.20px;transform-origin:100% 0;">308280</div><div class="t" style="top:491.07px;font-size:9.6px;line-height:9.6px;font-weight:normal;color:#141414;white-space:pre;left:206.60px;transform-origin:0.6px 0;transform:scaleX(0.9900);">Linea Lavorativa - 02/03/1998 - 190</div><div class="t" style="top:491.07px;font-size:9.6px;line-height:9.6px;font-weight:normal;color:#141414;white-space:pre;right:343.50px;transform-origin:100% 0;">1581.27</div><div style="left:205px;top:234px;width:1px;height:263px;background:#9ec2d5"></div><div style="left:370px;top:234px;width:1px;height:263px;background:#a2bfcd"></div><div style="left:457px;top:234px;width:1px;height:263px;background:#c8c8c8"></div><div style="left:785px;top:235px;width:13px;height:262px;background:linear-gradient(90deg,#e3e3e3,#efefef)"></div><div style="left:785px;top:237px;width:13px;height:13px;background:linear-gradient(#ffffff,#e0e0e0);border:1px solid #8f8f8f;box-sizing:border-box;border-radius:2px"></div><svg style="left:785px;top:237px" width="13" height="13" viewBox="0 0 13 13"><path d="M3.5 8 H9.5 L6.5 5 Z" fill="#222"/></svg><div style="left:785px;top:250px;width:13px;height:45px;background:linear-gradient(90deg,#b3bdc1,#c3cbce);border:1px solid #7b8487;box-sizing:border-box;border-radius:2px"></div><div style="left:788px;top:267px;width:7px;height:1px;background:#dde3e5"></div><div style="left:788px;top:268px;width:7px;height:1px;background:#98a4a8"></div><div style="left:788px;top:270px;width:7px;height:1px;background:#dde3e5"></div><div style="left:788px;top:271px;width:7px;height:1px;background:#98a4a8"></div><div style="left:788px;top:273px;width:7px;height:1px;background:#dde3e5"></div><div style="left:788px;top:274px;width:7px;height:1px;background:#98a4a8"></div><div style="left:788px;top:276px;width:7px;height:1px;background:#dde3e5"></div><div style="left:788px;top:277px;width:7px;height:1px;background:#98a4a8"></div><div style="left:435px;top:261px;width:292px;height:169px;background:#f4f3f1;border:1px solid #878787;box-sizing:border-box"></div><div class="t" style="top:269.07px;font-size:9.6px;line-height:9.6px;font-weight:normal;color:#141414;white-space:pre;left:471.90px;transform-origin:0.6px 0;transform:scaleX(0.9459);">Visualizza cedolino selezionato</div><svg style="left:455px;top:266px" width="14" height="14" viewBox="0 0 14 14"><rect x="0.5" y="0.5" width="13" height="13" rx="1" fill="#d3e3ef" stroke="#b4c6d4"/><circle cx="6" cy="6" r="3.2" fill="#eef6fc" stroke="#7fa2c2" stroke-width="1.1"/><path d="M8.3 8.3 L11.5 11.5" stroke="#9aa8b8" stroke-width="1.6"/></svg><div class="t" style="top:287.07px;font-size:9.6px;line-height:9.6px;font-weight:normal;color:#141414;white-space:pre;left:471.90px;transform-origin:0.6px 0;transform:scaleX(0.9538);">Rimuovi la pubblicazione del cedolino selezionato</div><svg style="left:455px;top:285px" width="14" height="13" viewBox="0 0 14 13"><path d="M1.5 0.5 H8.5 L11.5 3.5 V12.5 H1.5 Z" fill="#f4f4f4" stroke="#8c8c8c"/><path d="M8.5 0.5 V3.5 H11.5" fill="#d8d8d8" stroke="#8c8c8c"/><path d="M4 6.5 H8 V4.5 L12.5 7.8 L8 11 V9 H4 Z" fill="#d42a20"/></svg><div class="t" style="top:305.07px;font-size:9.6px;line-height:9.6px;font-weight:normal;color:#141414;white-space:pre;left:471.90px;transform-origin:0.6px 0;transform:scaleX(0.9565);">Pubblica tutti i cedolini dell'Elaborazione</div><svg style="left:455px;top:303px" width="14" height="13" viewBox="0 0 14 13"><path d="M1.5 0.5 H8.5 L11.5 3.5 V12.5 H1.5 Z" fill="#f4f4f4" stroke="#8c8c8c"/><path d="M8.5 0.5 V3.5 H11.5" fill="#d8d8d8" stroke="#8c8c8c"/><path d="M4 6.5 H8 V4.5 L12.5 7.8 L8 11 V9 H4 Z" fill="#2c9a3a"/></svg><div class="t" style="top:323.07px;font-size:9.6px;line-height:9.6px;font-weight:normal;color:#141414;white-space:pre;left:471.90px;transform-origin:0.6px 0;transform:scaleX(0.9577);">Rimuovi la pubblicazione di tutti i cedolini dell'Elaborazione</div><svg style="left:455px;top:321px" width="14" height="13" viewBox="0 0 14 13"><path d="M1.5 0.5 H8.5 L11.5 3.5 V12.5 H1.5 Z" fill="#f4f4f4" stroke="#8c8c8c"/><path d="M8.5 0.5 V3.5 H11.5" fill="#d8d8d8" stroke="#8c8c8c"/><path d="M4 6.5 H8 V4.5 L12.5 7.8 L8 11 V9 H4 Z" fill="#d42a20"/></svg><div class="t" style="top:341.07px;font-size:9.6px;line-height:9.6px;font-weight:normal;color:#141414;white-space:pre;left:471.90px;transform-origin:0.6px 0;transform:scaleX(0.9650);">Pubblica tutti i cedolini del Dipendente</div><svg style="left:455px;top:339px" width="14" height="13" viewBox="0 0 14 13"><path d="M1.5 0.5 H8.5 L11.5 3.5 V12.5 H1.5 Z" fill="#f4f4f4" stroke="#8c8c8c"/><path d="M8.5 0.5 V3.5 H11.5" fill="#d8d8d8" stroke="#8c8c8c"/><path d="M4 6.5 H8 V4.5 L12.5 7.8 L8 11 V9 H4 Z" fill="#2c9a3a"/></svg><div class="t" style="top:359.07px;font-size:9.6px;line-height:9.6px;font-weight:normal;color:#141414;white-space:pre;left:471.90px;transform-origin:0.6px 0;transform:scaleX(0.9647);">Rimuovi la pubblicazione di tutti i cedolini del Dipendente</div><svg style="left:455px;top:357px" width="14" height="13" viewBox="0 0 14 13"><path d="M1.5 0.5 H8.5 L11.5 3.5 V12.5 H1.5 Z" fill="#f4f4f4" stroke="#8c8c8c"/><path d="M8.5 0.5 V3.5 H11.5" fill="#d8d8d8" stroke="#8c8c8c"/><path d="M4 6.5 H8 V4.5 L12.5 7.8 L8 11 V9 H4 Z" fill="#d42a20"/></svg><div class="t" style="top:378.07px;font-size:9.6px;line-height:9.6px;font-weight:normal;color:#141414;white-space:pre;left:471.90px;transform-origin:0.6px 0;transform:scaleX(0.9560);">Rimuovi l'archiviazione del cedolino selezionato</div><svg style="left:455px;top:375px" width="14" height="14" viewBox="0 0 14 14"><path d="M1 3 L6 0.8 L12 2.5 V11 L6 13.5 L1 11.5 Z" fill="#c4583a"/><path d="M6 0.8 V13.5" stroke="#8e2e14" stroke-width="1"/><path d="M7 5 L12 4 V7" fill="#e8a080"/><rect x="9" y="8.5" width="4.5" height="4.5" fill="#d84020"/></svg><div class="t" style="top:396.07px;font-size:9.6px;line-height:9.6px;font-weight:normal;color:#141414;white-space:pre;left:471.90px;transform-origin:0.6px 0;transform:scaleX(0.9756);">Invia cedolino selezionato tramite e-mail</div><svg style="left:455px;top:393px" width="14" height="14" viewBox="0 0 14 14"><path d="M1 5 L7 1.5 L13 5 V12.5 H1 Z" fill="#eef0f4" stroke="#9aa4b4"/><path d="M1 5 L7 9 L13 5" stroke="#9aa4b4" fill="none"/><circle cx="9.5" cy="10" r="2.8" fill="#3ca040"/></svg><div class="t" style="top:414.07px;font-size:9.6px;line-height:9.6px;font-weight:normal;color:#141414;white-space:pre;left:471.90px;transform-origin:0.6px 0;transform:scaleX(0.9648);">Salva su file cedolino selezionato</div><svg style="left:455px;top:411px" width="14" height="14" viewBox="0 0 14 14"><rect x="0.8" y="0.8" width="12.4" height="12.4" rx="1.5" fill="#2b5ca8"/><rect x="3.5" y="1.3" width="7" height="4.5" fill="#e6ecf6"/><rect x="3" y="8" width="8" height="5" fill="#c4d0e4"/><rect x="4.5" y="9" width="1.5" height="3" fill="#2b5ca8"/></svg></body></html>
